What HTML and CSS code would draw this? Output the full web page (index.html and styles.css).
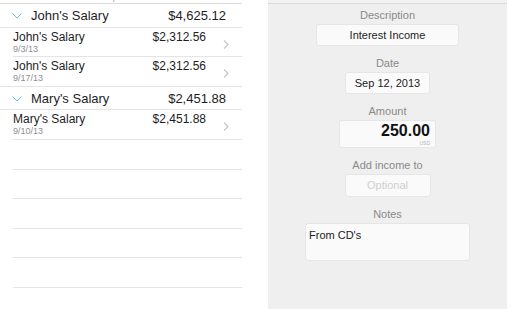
FILE: index.html
```html
<!DOCTYPE html>
<html>
<head>
  <meta charset="utf-8">
  <meta name="viewport" content="width=device-width">
  <title>Income</title>
  <link rel="stylesheet" href="styles.css">
</head>
<body>
	<div class="page">
		<div class="list">
			<div class="list-top"><span>Expected</span></div>

			<div class="group">
				<svg class="chev-down" width="10" height="6" viewBox="0 0 10 6"><polyline points="0.5,0.5 5,5 9.5,0.5" fill="none" stroke="#6cc4ee" stroke-width="1"/></svg>
				<span class="group-name">John's Salary</span>
				<span class="group-amount">$4,625.12</span>
			</div>
			<div class="row">
				<div class="row-main">
					<div class="row-name">John's Salary</div>
					<div class="row-date">9/3/13</div>
				</div>
				<div class="row-amount">$2,312.56</div>
				<svg class="chev-right" width="7" height="9" viewBox="0 0 7 9"><polyline points="1,0.5 5,4.5 1,8.5" fill="none" stroke="#c8c8cd" stroke-width="1.3"/></svg>
			</div>
			<div class="row">
				<div class="row-main">
					<div class="row-name">John's Salary</div>
					<div class="row-date">9/17/13</div>
				</div>
				<div class="row-amount">$2,312.56</div>
				<svg class="chev-right" width="7" height="9" viewBox="0 0 7 9"><polyline points="1,0.5 5,4.5 1,8.5" fill="none" stroke="#c8c8cd" stroke-width="1.3"/></svg>
			</div>

			<div class="group">
				<svg class="chev-down" width="10" height="6" viewBox="0 0 10 6"><polyline points="0.5,0.5 5,5 9.5,0.5" fill="none" stroke="#6cc4ee" stroke-width="1"/></svg>
				<span class="group-name">Mary's Salary</span>
				<span class="group-amount">$2,451.88</span>
			</div>
			<div class="row">
				<div class="row-main">
					<div class="row-name">Mary's Salary</div>
					<div class="row-date">9/10/13</div>
				</div>
				<div class="row-amount">$2,451.88</div>
				<svg class="chev-right" width="7" height="9" viewBox="0 0 7 9"><polyline points="1,0.5 5,4.5 1,8.5" fill="none" stroke="#c8c8cd" stroke-width="1.3"/></svg>
			</div>

			<div class="row empty"></div>
			<div class="row empty"></div>
			<div class="row empty"></div>
			<div class="row empty"></div>
			<div class="row empty"></div>
		</div>

		<div class="form">
			<div class="field">
				<div class="label">Description</div>
				<div class="box desc">Interest Income</div>
			</div>
			<div class="field">
				<div class="label">Date</div>
				<div class="box date">Sep 12, 2013</div>
			</div>
			<div class="field">
				<div class="label">Amount</div>
				<div class="box amount">
					<span class="amount-value">250.00</span>
					<span class="amount-cur">USD</span>
				</div>
			</div>
			<div class="field">
				<div class="label">Add income to</div>
				<div class="box target">Optional</div>
			</div>
			<div class="field">
				<div class="label">Notes</div>
				<div class="box notes">From CD's</div>
			</div>
		</div>
	</div>
</body>
</html>
```

FILE: styles.css
```css
	html,body{
		margin:0;
		padding:0;
		background:#FFF;
	}
	body{
		font-family:"Liberation Sans", Arial, sans-serif;
		color:#1d1d1f;
	}
	.page{
		display:flex;
		width:514px;
		height:309px;
		overflow:hidden;
	}

	/* left list */
	.list{
		width:242px;
		flex:none;
	}
	.list-top{
		height:3px;
		overflow:hidden;
		text-align:center;
		border-bottom:1px solid #dcdcdc;
	}
	.list-top span{
		display:block;
		margin-top:-8px;
		font-size:9px;
		line-height:11px;
		color:#9a9a9a;
	}
	.group{
		display:flex;
		align-items:center;
		height:22.6px;
		padding:0 16px 0 12px;
		border-bottom:1px solid #e4e4e4;
	}
	.chev-down{
		flex:none;
		margin-right:9px;
		margin-top:2px;
	}
	.group-name{
		flex:1;
		font-size:13px;
	}
	.group-amount{
		font-size:13px;
	}
	.row{
		display:flex;
		align-items:flex-start;
		height:26.6px;
		padding-top:2px;
		margin-left:13px;
		border-bottom:1px solid #e4e4e4;
	}
	.row:has(+ .group){
		margin-left:0;
		padding-left:13px;
	}
	.row-main{
		flex:1;
	}
	.row-name{
		font-size:12px;
		line-height:14px;
	}
	.row-date{
		font-size:9px;
		line-height:11px;
		color:#8e8e93;
	}
	.row-amount{
		font-size:12px;
		line-height:14px;
	}
	.chev-right{
		flex:none;
		margin:10px 12px 0 17px;
	}

	/* right form */
	.form{
		width:239px;
		flex:none;
		margin-left:26px;
		padding-top:9px;
		background:linear-gradient(#f2f2f2 0, #f2f2f2 3px, #dadada 3px, #dadada 4px, #efefef 4px);
		display:flex;
		flex-direction:column;
		align-items:center;
		gap:11px;
	}
	.field{
		display:flex;
		flex-direction:column;
		align-items:center;
	}
	.label{
		font-size:11px;
		line-height:13px;
		color:#8a8a8a;
		margin-bottom:2px;
	}
	.box{
		box-sizing:border-box;
		background:#fafafa;
		border:1px solid #e6e6e6;
		border-radius:3px;
		font-size:11px;
		text-align:center;
	}
	.desc{
		width:143px;
		height:22px;
		line-height:20px;
	}
	.date{
		width:85px;
		height:22px;
		line-height:20px;
	}
	.amount{
		width:97px;
		height:28px;
		text-align:right;
		padding:1px 5px 0 0;
	}
	.amount-value{
		display:block;
		font-size:16px;
		font-weight:bold;
		line-height:18px;
		color:#111;
	}
	.amount-cur{
		display:block;
		font-size:5px;
		line-height:6px;
		color:#b5b5b5;
	}
	.target{
		width:86px;
		height:23px;
		line-height:21px;
		color:#cfcfcf;
	}
	.notes{
		width:165px;
		height:38px;
		text-align:left;
		padding:5px 3px;
		line-height:12px;
		color:#222;
	}
```
